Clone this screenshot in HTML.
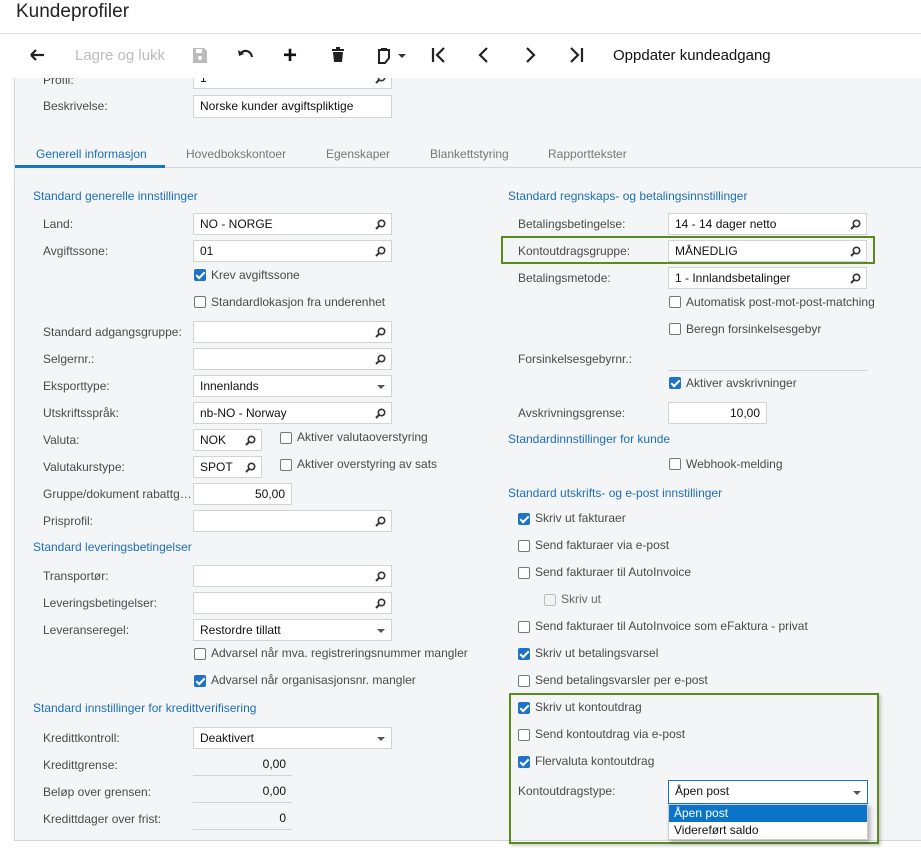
<!DOCTYPE html>
<html><head><meta charset="utf-8"><style>
body{margin:0;width:921px;height:852px;position:relative;overflow:hidden;background:#fff;font-family:"Liberation Sans",sans-serif;}
.a{position:absolute;}
#content{position:absolute;left:14px;top:78px;width:907px;height:762px;background:#f4f5f7;border-left:1px solid #d4d4d4;border-bottom:1px solid #d4d4d4;}
.l{position:absolute;font-size:12px;color:#4a4a4a;white-space:nowrap;line-height:14px;}
.h{position:absolute;font-size:12px;color:#1d6fb8;white-space:nowrap;line-height:14px;}
.b{position:absolute;height:22px;background:#fff;border:1px solid #d3d3d3;box-sizing:border-box;font-size:12px;color:#111;line-height:20px;padding-left:6px;white-space:nowrap;}
.b.r{text-align:right;padding-right:6px;}
.b.n{background:transparent;border:none;border-bottom:1px solid #d3d3d3;}
.s{position:absolute;right:5px;top:5px;width:11px;height:11px;}
.d{position:absolute;right:6px;top:9px;width:0;height:0;border-left:4px solid transparent;border-right:4px solid transparent;border-top:4px solid #555;}
.c{position:absolute;width:12px;height:12px;border:1px solid #777;border-radius:2px;background:#fff;box-sizing:border-box;}
.c.k{background:#1f73c6;border-color:#1f73c6;}
.c.k::after{content:"";position:absolute;left:3px;top:0px;width:3px;height:7px;border:solid #fff;border-width:0 2px 2px 0;transform:rotate(45deg);}
.c.g{border-color:#bbb;background:#f4f4f4;}
.tab{position:absolute;top:147px;font-size:12px;color:#777;}
.tb{position:absolute;top:45px;z-index:6;}
.z{z-index:6;}
</style></head><body>
<div class="a" style="left:0;top:34px;width:921px;height:44px;background:#fff;z-index:5;"></div>
<div class="a" style="left:16px;top:1px;font-size:19px;color:#222;">Kundeprofiler</div>
<div class="a" style="left:0;top:33px;width:921px;height:1px;background:#ddd;"></div>
<!-- toolbar -->
<svg class="tb" style="left:28px" width="20" height="20" viewBox="0 0 20 20"><path d="M3 10H16M3 10L8 5M3 10L8 15" stroke="#222" stroke-width="2.2" fill="none"/></svg>
<div class="a z" style="left:75px;top:47px;font-size:15px;color:#bbb;">Lagre og lukk</div>
<svg class="tb" style="left:191px" width="18" height="20" viewBox="0 0 18 20"><path d="M2 3h11l3 3v12H2z" fill="#bbb"/><rect x="5" y="4" width="6" height="4" fill="#fff"/><circle cx="9" cy="13" r="2" fill="#fff"/></svg>
<svg class="tb" style="left:236px" width="20" height="20" viewBox="0 0 20 20"><path d="M5 8C9 4 15 6 16 12" stroke="#222" stroke-width="2.2" fill="none"/><path d="M2 5L3 11L8 9z" fill="#222"/></svg>
<div class="a z" style="left:283px;top:42px;font-size:24px;font-weight:bold;color:#111;">+</div>
<svg class="tb" style="left:330px" width="16" height="20" viewBox="0 0 16 20"><rect x="2" y="4" width="12" height="2" fill="#222"/><rect x="6" y="2" width="4" height="2" fill="#222"/><path d="M3 7h10l-1 10H4z" fill="#222"/></svg>
<svg class="tb" style="left:376px" width="16" height="20" viewBox="0 0 16 20"><path d="M3 5h10v8l-4 5H3z" stroke="#222" stroke-width="2" fill="none"/><rect x="5" y="3" width="6" height="3" fill="#222"/></svg>
<div class="a z" style="left:398px;top:54px;border-left:4px solid transparent;border-right:4px solid transparent;border-top:4px solid #333;"></div>
<svg class="tb" style="left:430px" width="18" height="20" viewBox="0 0 18 20"><path d="M3 3V17M14 3L7 10L14 17" stroke="#222" stroke-width="2.2" fill="none"/></svg>
<svg class="tb" style="left:475px" width="18" height="20" viewBox="0 0 18 20"><path d="M12 3L5 10L12 17" stroke="#222" stroke-width="2.2" fill="none"/></svg>
<svg class="tb" style="left:521px" width="18" height="20" viewBox="0 0 18 20"><path d="M6 3L13 10L6 17" stroke="#222" stroke-width="2.2" fill="none"/></svg>
<svg class="tb" style="left:567px" width="18" height="20" viewBox="0 0 18 20"><path d="M15 3V17M4 3L11 10L4 17" stroke="#222" stroke-width="2.2" fill="none"/></svg>
<div class="a z" style="left:613px;top:47px;font-size:15px;color:#111;">Oppdater kundeadgang</div>

<div id="content"></div>
<svg width="0" height="0" style="position:absolute"><defs><symbol id="mg" viewBox="0 0 11 11"><circle cx="6.5" cy="4.5" r="3.2" stroke="#333" stroke-width="1.6" fill="none"/><path d="M4.2 6.8L1 10" stroke="#333" stroke-width="2"/></symbol></defs></svg>
<div class="l" style="left:43px;top:73px;">Profil:</div>
<div class="b" style="left:193px;top:67px;width:199px;height:22px;">1<svg class="s"><use href="#mg"/></svg></div>
<div class="l" style="left:43px;top:99px;">Beskrivelse:</div>
<div class="b" style="left:193px;top:95px;width:199px;height:23px;">Norske kunder avgiftspliktige</div>

<div class="a" style="left:15px;top:167px;width:906px;height:1px;background:#d8d8d8"></div>
<div class="a" style="left:15px;top:165px;width:150px;height:3px;background:#1a73c6"></div>
<div class="tab" style="left:36px;color:#1d6fb8;">Generell informasjon</div>
<div class="tab" style="left:186px;">Hovedbokskontoer</div>
<div class="tab" style="left:326px;">Egenskaper</div>
<div class="tab" style="left:430px;">Blankettstyring</div>
<div class="tab" style="left:548px;">Rapporttekster</div>

<!-- left -->
<div class="h" style="left:33px;top:189px;">Standard generelle innstillinger</div>
<div class="l" style="left:43px;top:217px;">Land:</div><div class="b" style="left:193px;top:213px;width:199px;">NO - NORGE<svg class="s"><use href="#mg"/></svg></div>
<div class="l" style="left:43px;top:244px;">Avgiftssone:</div><div class="b" style="left:193px;top:240px;width:199px;">01<svg class="s"><use href="#mg"/></svg></div>
<div class="c k" style="left:194px;top:269px"></div><div class="l" style="left:211px;top:268px;">Krev avgiftssone</div>
<div class="c" style="left:194px;top:296px"></div><div class="l" style="left:211px;top:295px;">Standardlokasjon fra underenhet</div>
<div class="l" style="left:43px;top:325px;">Standard adgangsgruppe:</div><div class="b" style="left:193px;top:321px;width:199px;"><svg class="s"><use href="#mg"/></svg></div>
<div class="l" style="left:43px;top:352px;">Selgernr.:</div><div class="b" style="left:193px;top:348px;width:199px;"><svg class="s"><use href="#mg"/></svg></div>
<div class="l" style="left:43px;top:379px;">Eksporttype:</div><div class="b" style="left:193px;top:375px;width:199px;">Innenlands<div class="d"></div></div>
<div class="l" style="left:43px;top:406px;">Utskriftsspråk:</div><div class="b" style="left:193px;top:402px;width:199px;">nb-NO - Norway<svg class="s"><use href="#mg"/></svg></div>
<div class="l" style="left:43px;top:433px;">Valuta:</div><div class="b" style="left:193px;top:429px;width:69px;">NOK<svg class="s"><use href="#mg"/></svg></div>
<div class="c" style="left:280px;top:432px"></div><div class="l" style="left:297px;top:430px;">Aktiver valutaoverstyring</div>
<div class="l" style="left:43px;top:460px;">Valutakurstype:</div><div class="b" style="left:193px;top:456px;width:69px;">SPOT<svg class="s"><use href="#mg"/></svg></div>
<div class="c" style="left:280px;top:459px"></div><div class="l" style="left:297px;top:457px;">Aktiver overstyring av sats</div>
<div class="l" style="left:43px;top:487px;">Gruppe/dokument rabattg…</div><div class="b r" style="left:193px;top:483px;width:99px;">50,00</div>
<div class="l" style="left:43px;top:514px;">Prisprofil:</div><div class="b" style="left:193px;top:510px;width:199px;"><svg class="s"><use href="#mg"/></svg></div>
<div class="h" style="left:33px;top:540px;">Standard leveringsbetingelser</div>
<div class="l" style="left:43px;top:569px;">Transportør:</div><div class="b" style="left:193px;top:565px;width:199px;"><svg class="s"><use href="#mg"/></svg></div>
<div class="l" style="left:43px;top:596px;">Leveringsbetingelser:</div><div class="b" style="left:193px;top:592px;width:199px;"><svg class="s"><use href="#mg"/></svg></div>
<div class="l" style="left:43px;top:623px;">Leveranseregel:</div><div class="b" style="left:193px;top:619px;width:199px;">Restordre tillatt<div class="d"></div></div>
<div class="c" style="left:194px;top:648px"></div><div class="l" style="left:211px;top:646px;">Advarsel når mva. registreringsnummer mangler</div>
<div class="c k" style="left:194px;top:675px"></div><div class="l" style="left:211px;top:673px;">Advarsel når organisasjonsnr. mangler</div>
<div class="h" style="left:33px;top:701px;">Standard innstillinger for kredittverifisering</div>
<div class="l" style="left:43px;top:731px;">Kredittkontroll:</div><div class="b" style="left:193px;top:727px;width:199px;">Deaktivert<div class="d"></div></div>
<div class="l" style="left:43px;top:758px;">Kredittgrense:</div><div class="b r n" style="left:193px;top:754px;width:99px;">0,00</div>
<div class="l" style="left:43px;top:785px;">Beløp over grensen:</div><div class="b r n" style="left:193px;top:781px;width:99px;">0,00</div>
<div class="l" style="left:43px;top:812px;">Kredittdager over frist:</div><div class="b r n" style="left:193px;top:808px;width:99px;">0</div>

<!-- right -->
<div class="h" style="left:508px;top:189px;">Standard regnskaps- og betalingsinnstillinger</div>
<div class="l" style="left:518px;top:217px;">Betalingsbetingelse:</div><div class="b" style="left:668px;top:213px;width:199px;">14 - 14 dager netto<svg class="s"><use href="#mg"/></svg></div>
<div class="a" style="left:501px;top:236px;width:370px;height:24px;border:2px solid #5a8a1e;"></div>
<div class="l" style="left:518px;top:244px;">Kontoutdragsgruppe:</div><div class="b" style="left:668px;top:240px;width:199px;">MÅNEDLIG<svg class="s"><use href="#mg"/></svg></div>
<div class="l" style="left:518px;top:271px;">Betalingsmetode:</div><div class="b" style="left:668px;top:267px;width:199px;">1 - Innlandsbetalinger<svg class="s"><use href="#mg"/></svg></div>
<div class="c" style="left:669px;top:296px"></div><div class="l" style="left:686px;top:295px;">Automatisk post-mot-post-matching</div>
<div class="c" style="left:669px;top:323px"></div><div class="l" style="left:686px;top:322px;">Beregn forsinkelsesgebyr</div>
<div class="l" style="left:518px;top:352px;">Forsinkelsesgebyrnr.:</div><div class="a" style="left:668px;top:370px;width:199px;height:1px;background:#d3d3d3"></div>
<div class="c k" style="left:669px;top:377px"></div><div class="l" style="left:686px;top:376px;">Aktiver avskrivninger</div>
<div class="l" style="left:518px;top:406px;">Avskrivningsgrense:</div><div class="b r" style="left:668px;top:402px;width:99px;">10,00</div>
<div class="h" style="left:508px;top:432px;">Standardinnstillinger for kunde</div>
<div class="c" style="left:669px;top:458px"></div><div class="l" style="left:686px;top:457px;">Webhook-melding</div>
<div class="h" style="left:508px;top:486px;">Standard utskrifts- og e-post innstillinger</div>
<div class="c k" style="left:518px;top:513px"></div><div class="l" style="left:535px;top:511px;">Skriv ut fakturaer</div>
<div class="c" style="left:518px;top:540px"></div><div class="l" style="left:535px;top:538px;">Send fakturaer via e-post</div>
<div class="c" style="left:518px;top:567px"></div><div class="l" style="left:535px;top:565px;">Send fakturaer til AutoInvoice</div>
<div class="c g" style="left:544px;top:594px"></div><div class="l" style="left:561px;top:592px;color:#666;">Skriv ut</div>
<div class="c" style="left:518px;top:621px"></div><div class="l" style="left:535px;top:619px;">Send fakturaer til AutoInvoice som eFaktura - privat</div>
<div class="c k" style="left:518px;top:648px"></div><div class="l" style="left:535px;top:646px;">Skriv ut betalingsvarsel</div>
<div class="c" style="left:518px;top:675px"></div><div class="l" style="left:535px;top:673px;">Send betalingsvarsler per e-post</div>
<div class="a" style="left:509px;top:693px;width:370px;height:151px;border:2px solid #5a8a1e;box-sizing:border-box;box-shadow:2px 2px 3px rgba(0,0,0,.2);"></div>
<div class="c k" style="left:518px;top:702px"></div><div class="l" style="left:535px;top:700px;">Skriv ut kontoutdrag</div>
<div class="c" style="left:518px;top:729px"></div><div class="l" style="left:535px;top:727px;">Send kontoutdrag via e-post</div>
<div class="c k" style="left:518px;top:756px"></div><div class="l" style="left:535px;top:754px;">Flervaluta kontoutdrag</div>
<div class="l" style="left:518px;top:784px;">Kontoutdragstype:</div>
<div class="b" style="left:668px;top:780px;width:200px;height:24px;border-color:#1a73c6;">Åpen post<div class="d" style="top:10px"></div></div>
<div class="a" style="left:668px;top:804px;width:200px;height:36px;background:#fff;border:1px solid #ccc;box-sizing:border-box;box-shadow:2px 2px 4px rgba(0,0,0,.3);font-size:12px;">
<div style="background:#0a74c9;color:#fff;height:17px;line-height:17px;padding-left:5px;">Åpen post</div>
<div style="color:#111;height:17px;line-height:17px;padding-left:5px;">Videreført saldo</div></div>
</body></html>
